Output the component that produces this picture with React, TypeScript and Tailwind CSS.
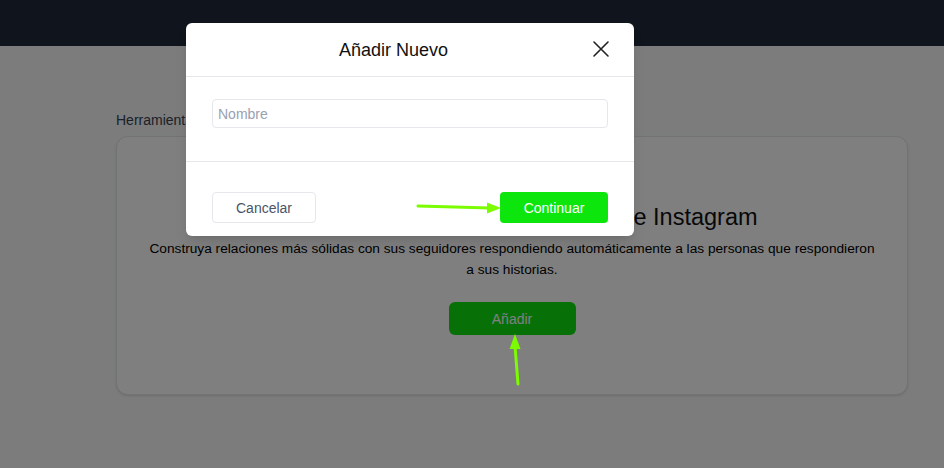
import React from "react";

export default function App() {
  const font = { fontFamily: '"Liberation Sans", Arial, sans-serif' };
  return (
    <div className="relative h-[468px] w-full overflow-hidden bg-[#f8f9fa]" style={font}>
      <header className="h-[46px] bg-[#10141d]" />
      <main className="pl-[116px] pt-[64px]">
        <div className="text-sm text-gray-700 leading-5">Herramientas</div>
        <div className="mt-[6px] flex w-[792px] flex-col items-center rounded-xl border border-gray-200 bg-white px-[30px] pt-[64px] pb-[59px] text-center shadow-sm">
          <h2 className="whitespace-nowrap text-[23.5px] leading-8 font-normal text-[#111]">
            Respuesta automática a historias de Instagram
          </h2>
          <p className="mt-[5px] text-[13.7px] leading-[21px] text-black">
            Construya relaciones más sólidas con sus seguidores respondiendo automáticamente a las personas que respondieron a sus historias.
          </p>
          <button className="mt-[22px] h-[33px] w-[127px] rounded-md bg-[#0ee00e] text-sm text-white">
            Añadir
          </button>
        </div>
      </main>

      <div className="absolute inset-x-0 top-[46px] bottom-0 bg-black/50" />

      <div className="absolute left-[186px] top-[23px] w-[448px] rounded-md bg-white shadow-lg">
        <div className="relative flex h-[54px] items-center justify-center border-b border-gray-200 pr-[33px]">
          <span className="text-lg text-[#111]">Añadir Nuevo</span>
          <button className="absolute right-[22px] top-[15px] text-[#222]">
            <svg width="22" height="22" viewBox="0 0 22 22" fill="none" stroke="currentColor" strokeWidth="1.6" strokeLinecap="round">
              <path d="M4 4 L18 18 M18 4 L4 18" />
            </svg>
          </button>
        </div>
        <div className="border-b border-gray-200 px-[26px] pt-[22px] pb-[33px]">
          <input
            placeholder="Nombre"
            className="h-[29px] w-full rounded border border-gray-200 px-[5px] text-sm text-gray-700 placeholder:text-gray-400 outline-none"
            style={font}
          />
        </div>
        <div className="flex items-center justify-between px-[26px] pt-[30px] pb-[13px]">
          <button className="h-[31px] w-[104px] rounded border border-gray-200 bg-white text-sm text-gray-600">
            Cancelar
          </button>
          <button className="h-[31px] w-[108px] rounded bg-[#0de60d] text-sm text-white">
            Continuar
          </button>
        </div>
      </div>

      <svg className="pointer-events-none absolute left-0 top-0" width="944" height="468">
        <line x1="418" y1="206" x2="490" y2="208" stroke="#7cfc00" strokeWidth="3" strokeLinecap="round" />
        <polygon points="501,208 487,202.5 487,213.5" fill="#7cfc00" />
        <line x1="518" y1="384" x2="515" y2="346" stroke="#7cfc00" strokeWidth="3" strokeLinecap="round" />
        <polygon points="515,334 509.5,349 520.5,349" fill="#7cfc00" />
      </svg>
    </div>
  );
}
